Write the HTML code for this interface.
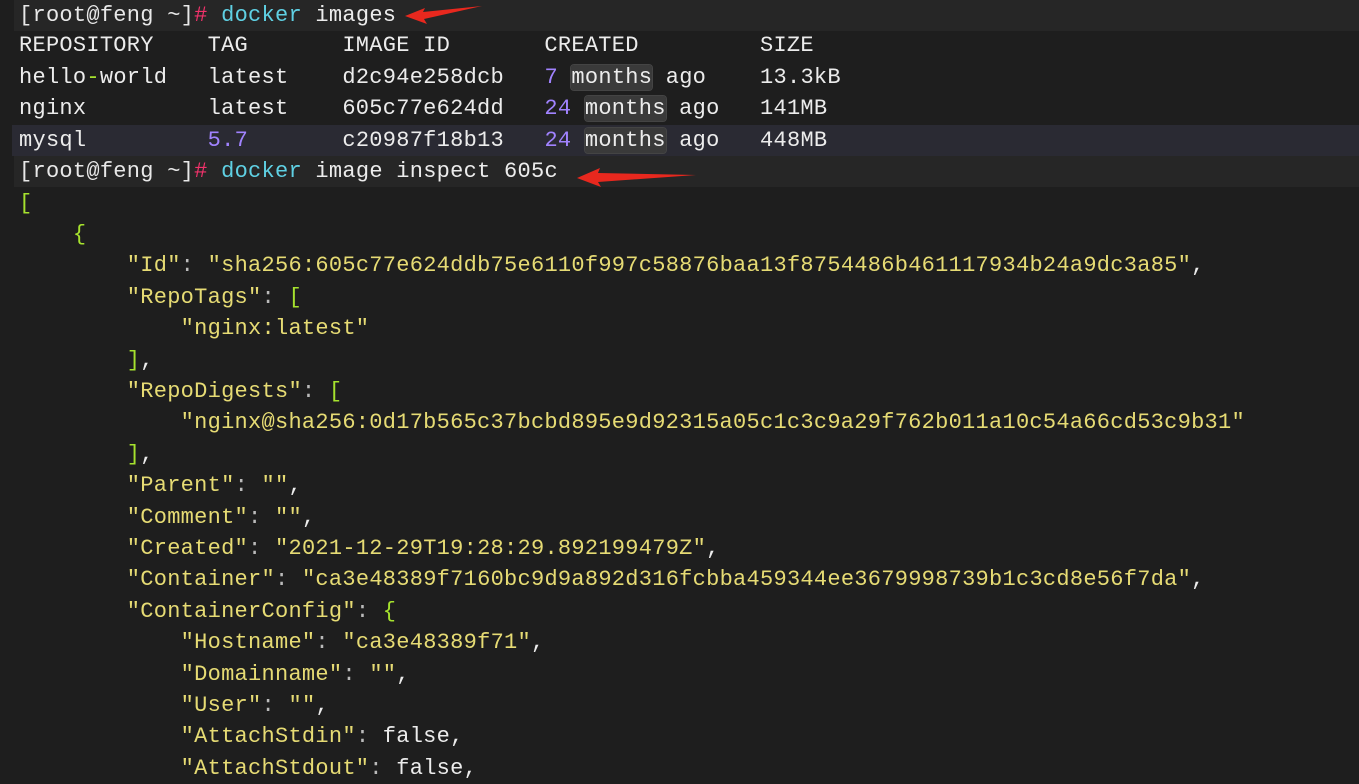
<!DOCTYPE html>
<html><head><style>
body{margin:0;width:1359px;height:778px;overflow:hidden;background:#1e1e1e;font-family:"Liberation Mono",monospace;font-size:22px;letter-spacing:0.27px;color:#ececec;position:relative}
.l{position:absolute;left:0;right:0;height:31.4px;line-height:31.4px;padding-left:19px;white-space:pre}
.p{background:#262626;left:14px;padding-left:5px}
.h{background:#2a2a33;left:12px;padding-left:7px}
.r{color:#e8e8e8}.hs{color:#f2326b}.c{color:#5fd0e3}.n{color:#a183ff}
.y{color:#e6db74}.g{color:#a6e22e}.w{color:#e0e0e0}.k{color:#bbb}
.m{background:#3a3a3a;border-radius:3px;outline:1px solid #444}
</style></head><body>
<div class="l p" style="top:0px"><span class="r">[root@feng ~]</span><span class="hs">#</span> <span class="c">docker</span> images</div>
<div class="l" style="top:30px">REPOSITORY    TAG       IMAGE ID       CREATED         SIZE</div>
<div class="l" style="top:62px">hello<span class="g">-</span>world   latest    d2c94e258dcb   <span class="n">7</span> <span class="m">months</span> ago    13.3kB</div>
<div class="l" style="top:93px">nginx         latest    605c77e624dd   <span class="n">24</span> <span class="m">months</span> ago   141MB</div>
<div class="l h" style="top:125px">mysql         <span class="n">5.7</span>       c20987f18b13   <span class="n">24</span> <span class="m">months</span> ago   448MB</div>
<div class="l p" style="top:156px"><span class="r">[root@feng ~]</span><span class="hs">#</span> <span class="c">docker</span> image inspect 605c</div>
<div class="l g" style="top:188px">[</div>
<div class="l g" style="top:219px">    {</div>
<div class="l" style="top:250px">        <span class="y">"Id"</span><span class="k">:</span> <span class="y">"sha256:605c77e624ddb75e6110f997c58876baa13f8754486b461117934b24a9dc3a85"</span>,</div>
<div class="l" style="top:282px">        <span class="y">"RepoTags"</span><span class="k">:</span> <span class="g">[</span></div>
<div class="l" style="top:313px">            <span class="y">"nginx:latest"</span></div>
<div class="l" style="top:345px">        <span class="g">]</span>,</div>
<div class="l" style="top:376px">        <span class="y">"RepoDigests"</span><span class="k">:</span> <span class="g">[</span></div>
<div class="l" style="top:407px">            <span class="y">"nginx@sha256:0d17b565c37bcbd895e9d92315a05c1c3c9a29f762b011a10c54a66cd53c9b31"</span></div>
<div class="l" style="top:439px">        <span class="g">]</span>,</div>
<div class="l" style="top:470px">        <span class="y">"Parent"</span><span class="k">:</span> <span class="y">""</span>,</div>
<div class="l" style="top:502px">        <span class="y">"Comment"</span><span class="k">:</span> <span class="y">""</span>,</div>
<div class="l" style="top:533px">        <span class="y">"Created"</span><span class="k">:</span> <span class="y">"2021-12-29T19:28:29.892199479Z"</span>,</div>
<div class="l" style="top:564px">        <span class="y">"Container"</span><span class="k">:</span> <span class="y">"ca3e48389f7160bc9d9a892d316fcbba459344ee3679998739b1c3cd8e56f7da"</span>,</div>
<div class="l" style="top:596px">        <span class="y">"ContainerConfig"</span><span class="k">:</span> <span class="g">{</span></div>
<div class="l" style="top:627px">            <span class="y">"Hostname"</span><span class="k">:</span> <span class="y">"ca3e48389f71"</span>,</div>
<div class="l" style="top:659px">            <span class="y">"Domainname"</span><span class="k">:</span> <span class="y">""</span>,</div>
<div class="l" style="top:690px">            <span class="y">"User"</span><span class="k">:</span> <span class="y">""</span>,</div>
<div class="l" style="top:721px">            <span class="y">"AttachStdin"</span><span class="k">:</span> false,</div>
<div class="l" style="top:753px">            <span class="y">"AttachStdout"</span><span class="k">:</span> false,</div>
<svg style="position:absolute;left:0;top:0" width="1359" height="778">
<polygon points="405,16 425,8 423,12 482,6 424,19 427,24" fill="#e8281e"/>
<polygon points="577,178 600,168 598,173 696,175 598,182 601,187" fill="#e8281e"/>
</svg>
</body></html>
